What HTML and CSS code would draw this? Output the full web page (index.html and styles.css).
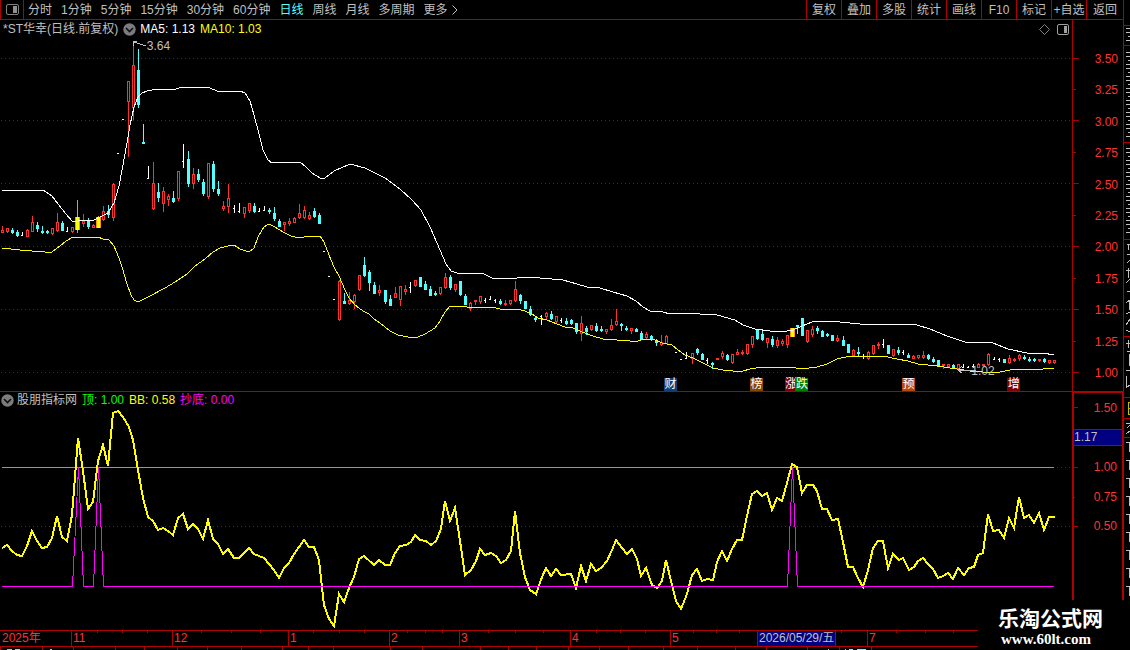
FILE: index.html
```html
<!DOCTYPE html>
<html lang="zh-CN">
<head>
	<meta charset="UTF-8">
	<title>*ST华幸 - 日线</title>
	<link rel="stylesheet" href="styles.css">
</head>
<body>

	<div class="wrap">

		<!-- toolbar -->
		<div class="toolbar">
			<button type="button" class="btn-side" aria-label="侧栏">
				<svg width="13" height="11" viewBox="0 0 13 11"><rect x="0.5" y="0.5" width="12" height="10" rx="1.5" fill="none" stroke="#808080"/><rect x="7" y="2" width="4" height="7" fill="#909090"/></svg>
			</button>
			<div class="period-list">
				<button type="button">分时</button>
				<button type="button">1分钟</button>
				<button type="button">5分钟</button>
				<button type="button">15分钟</button>
				<button type="button">30分钟</button>
				<button type="button">60分钟</button>
				<button type="button" class="on">日线</button>
				<button type="button">周线</button>
				<button type="button">月线</button>
				<button type="button">多周期</button>
				<button type="button" class="btn-more">更多<svg width="6" height="10" viewBox="0 0 6 10"><path d="M0.5 0.5L5 5L0.5 9.5" fill="none" stroke="#c0c0c0"/></svg></button>
			</div>
			<div class="tool-list">
				<button type="button">复权</button>
				<button type="button">叠加</button>
				<button type="button">多股</button>
				<button type="button">统计</button>
				<button type="button">画线</button>
				<button type="button">F10</button>
				<button type="button">标记</button>
				<button type="button">+自选</button>
				<button type="button">返回</button>
			</div>
		</div>
		<!-- //toolbar -->

		<!-- price -->
		<div class="pane pane-price">
			<svg class="plot" viewBox="0 20 1072 371" preserveAspectRatio="none">
				<g class="grid">
					<path d="M1 58.5H1072M1 120.5H1072M1 183.5H1072M1 246.5H1072M1 309.5H1072M1 372.5H1072"/>
				</g>
				<g id="el-candles"></g>
				<polyline class="ln-white" points="2,190 43,190 52,196 58,204 66,214 72,221 78,221 94,220 102,216 108,213 114,203 119,186 123,165 127,143 130,125 134,107 138,97 142,93 147,91 158,89 173,90 182,87 190,87 210,88 217,91 228,92 240,91 245,93 250,101 254,115 258,130 263,150 268,160 272,163 277,162 300,162 306,167 312,173 320,178 325,178 334,171 350,164 365,168 385,178 400,189 412,200 421,210 430,227 437,243 446,264 451,271 457,273 482,273 492,278 517,278 530,277 540,278 563,280 577,284 587,287 600,288 613,292 627,296 636,301 643,307 650,311 663,312 670,314 690,313 700,314 717,315 735,320 743,325 755,329 770,331 787,331 793,330 802,326 812,322 820,321 833,321 840,322 860,324 903,324 910,324 917,325 930,329 947,336 965,342 993,343 1008,349 1027,353 1043,353 1054,355"/>
				<polyline class="ln-yellow" points="2,248 20,250 32,251 45,252 52,252 60,246 66,241 73,237 98,237 103,239 109,240 114,246 119,258 123,270 127,284 131,295 134,300 138,302 144,299 150,296 165,288 175,282 187,274 195,266 205,259 213,252 220,248 228,246 234,245 240,249 249,252 254,248 258,237 264,227 269,224 275,227 283,232 291,236 299,238 309,236 320,236 324,242 329,255 334,267 339,276 345,290 349,298 355,305 363,311 369,314 374,319 380,323 390,331 398,335 408,337 418,337 425,334 435,328 440,321 445,312 450,306 462,306 467,307 492,307 500,309 517,309 525,311 532,314 538,318 547,320 557,324 565,327 573,328 582,332 593,336 603,339 617,340 630,341 638,341 643,339 653,339 662,343 672,345 678,350 685,355 693,358 703,363 713,368 723,370 733,371 743,371 750,369 763,367 790,367 802,369 817,367 827,364 837,359 850,356 883,356 897,359 908,361 918,364 937,366 957,369 970,371 983,372 1000,372 1010,370 1043,369 1054,368"/>
				<path class="ln-mark" d="M133.500 46V41H137M134 42L146 46M958 370H976M962 366L958 370L962 373"/>
			</svg>

			<div class="pane-title">
				<span>*ST华幸(日线.前复权)</span>
				<button type="button" class="btn-drop" aria-label="指标菜单"><svg width="13" height="13" viewBox="0 0 13 13"><circle cx="6.5" cy="6.5" r="6.2" fill="#7c7c7c"/><path d="M3 5L6.5 8.500L10 5" fill="none" stroke="#101010" stroke-width="1.6"/></svg></button>
				<span class="t-white">MA5: 1.13</span>
				<span class="t-yellow t-next">MA10: 1.03</span>
				<span class="pane-tools">
					<svg width="11" height="11" viewBox="0 0 11 11"><path d="M5.500 0.5L10.500 5.500L5.500 10.500L0.5 5.500Z" fill="none" stroke="#808080"/></svg>
					<svg width="12" height="11" viewBox="0 0 12 11"><rect x="0.5" y="0.5" width="11" height="10" rx="1.5" fill="none" stroke="#a0a0a0"/><rect x="7" y="2" width="3" height="7" fill="#a0a0a0"/></svg>
				</span>
			</div>

			<span class="mark mark-high">3.64</span>
			<span class="mark mark-low">1.02</span>

			<span class="flag flag-cai">财</span>
			<span class="flag flag-bang">榜</span>
			<span class="flag flag-zhang">涨</span>
			<span class="flag flag-die">跌</span>
			<span class="flag flag-yu">预</span>
			<span class="flag flag-zeng">增</span>
		</div>

		<div class="axis axis-price">
			<svg class="plot" viewBox="1072 20 51 371" preserveAspectRatio="none">
				<path class="ln-red" d="M1072 58.5H1078M1072 120.500H1078M1072 183.500H1078M1072 246.500H1078M1072 309.500H1078M1072 372.500H1078M1072 89.500H1075M1072 152.500H1075M1072 215.500H1075M1072 278.500H1075M1072 341.500H1075"/>
			</svg>
			<span>3.50</span>
			<span>3.25</span>
			<span>3.00</span>
			<span>2.75</span>
			<span>2.50</span>
			<span>2.25</span>
			<span>2.00</span>
			<span>1.75</span>
			<span>1.50</span>
			<span>1.25</span>
			<span>1.00</span>
		</div>
		<!-- //price -->

		<!-- indicator -->
		<div class="pane pane-sub">
			<svg class="plot" viewBox="0 392 1072 238" preserveAspectRatio="none">
				<g class="grid"><path d="M1 526.5H1072M1057 467.5H1072"/></g>
				<path class="ln-green" d="M2 467.5H1054"/>
				<polyline class="ln-bb" points="2,548 7,545 12,551 17,555 22,556 27,546 32,531 37,541 42,548 47,547 52,538 57,516 62,537 67,541 72,515 78,438 83,471 88,509 93,502 98,461 103,445 108,466 113,413 118,411 123,417 129,427 133,440 138,470 143,498 148,517 153,521 158,530 163,528 168,531 173,535 178,518 183,514 188,529 193,524 198,529 203,539 208,520 213,539 218,544 223,554 228,549 234,558 239,558 249,548 254,554 259,556 264,558 269,564 274,570 279,578 284,568 289,563 294,554 299,547 304,540 309,547 314,547 319,560 324,605 329,619 334,626 339,594 344,602 349,588 354,577 359,559 364,556 374,565 379,560 385,565 390,565 395,553 400,546 406,545 411,542 415,535 420,540 426,541 431,545 436,541 441,529 445,501 450,521 455,508 460,541 465,575 471,570 476,561 480,549 485,555 491,553 496,556 501,563 506,560 511,551 515,511 520,553 525,577 530,590 536,594 542,577 546,568 551,576 556,569 561,575 571,574 576,588 581,566 586,581 591,564 596,571 601,568 607,561 612,550 616,540 622,548 627,554 632,549 637,559 641,576 646,568 652,585 657,588 662,581 666,560 671,581 676,601 681,609 687,594 692,575 697,569 702,581 707,579 713,580 717,562 722,551 727,561 732,549 737,540 742,540 747,516 752,494 757,491 762,496 767,493 772,510 777,498 782,501 787,483 792,464 797,467 802,493 807,485 813,485 817,491 822,509 827,509 832,520 838,519 843,542 848,567 853,567 858,578 863,587 868,570 873,548 878,541 883,541 888,568 893,554 899,560 903,558 909,570 914,567 918,561 923,558 928,564 933,569 938,578 943,576 948,573 953,579 958,568 964,575 969,568 974,567 978,555 983,553 988,514 993,531 999,530 1004,538 1009,518 1014,528 1019,497 1024,518 1029,515 1034,523 1039,513 1044,530 1049,517 1055,517"/>
				<polyline class="ln-magenta" points="2,586.5 72.5,586.5 78.5,467 83.5,586.5 93.5,586.5 98.5,467 103.5,586.5 787.5,586.5 792.5,467 797.5,586.5 1054,586.5"/>
			</svg>
			<div class="pane-title">
				<button type="button" class="btn-drop" aria-label="指标菜单"><svg width="13" height="13" viewBox="0 0 13 13"><circle cx="6.5" cy="6.5" r="6.2" fill="#7c7c7c"/><path d="M3 5L6.5 8.500L10 5" fill="none" stroke="#101010" stroke-width="1.6"/></svg></button>
				<span>股朋指标网</span>
				<span class="t-green t-next">顶: 1.00</span>
				<span class="t-yellow t-next">BB: 0.58</span>
				<span class="t-magenta t-next">抄底: 0.00</span>
			</div>
		</div>

		<div class="axis axis-sub">
			<svg class="plot" viewBox="1074 393 48 237" preserveAspectRatio="none">
				<path class="ln-red" d="M1074 407.5H1078M1074 467.5H1078M1074 526.5H1078M1074 497.5H1075"/>
			</svg>
			<span>1.50</span>
			<span class="cursor-value">1.17</span>
			<span>1.00</span>
			<span>0.75</span>
			<span>0.50</span>
		</div>
		<!-- //indicator -->

		<!-- right strip, cut off by the window edge -->
		<div class="strip">
			<svg class="plot" viewBox="1124 0 6 650" preserveAspectRatio="none">
				<path class="ln-red" d="M1124 25.5H1130M1124 45.5H1130M1124 142.5H1130M1124 239.5H1130M1124 336.5H1130M1124 397.5H1130M1124 418.5H1130M1124 437.5H1130"/>
				<g id="el-strip" class="ln-gray"></g>
				<path class="ln-gray" d="M1127 244.5H1130M1128.500 244V250M1127 254.500H1130M1127 263L1130 260M1126 270.500H1130M1128.500 268V278M1126 283L1130 279M1127 291.500H1130M1126 303L1130 300M1129.500 300V310M1126 314L1130 312M1126 325L1130 319M1126 330L1130 332M1126 343.500H1130M1128.500 340V348M1127 351.500H1130M1129.500 354V366M1126 370.500H1130M1126.500 376V388M1126 388L1130 385M1126 423.500H1130M1127 428L1130 425M1126 434L1130 431"/>
				<path class="ln-olive" d="M1130 402.500H1128.500V414.500H1130M1128 408.500H1130"/>
			</svg>
		</div>

		<!-- time -->
		<div class="time">
			<svg class="plot" viewBox="0 630 978 20" preserveAspectRatio="none">
				<path class="ln-red" d="M0 630.5H978M0 646.5H978"/>
				<g id="el-ticks" class="ln-red"></g>
				<path class="ln-gray" d="M7 649.5H12M15 649.5H20M50 649.5H52M828 649.5H829M845 649.5H846"/>
				<path class="ln-cyan" d="M849 649.5H853M857 649.5H866"/>
			</svg>
			<div class="time-list">
				<span>2025年</span>
				<span>11</span>
				<span>12</span>
				<span>1</span>
				<span>2</span>
				<span>3</span>
				<span>4</span>
				<span>5</span>
				<span>7</span>
			</div>
			<span class="cursor-date">2026/05/29/五</span>
		</div>
		<!-- //time -->

		<div class="site">
			<strong>乐淘公式网</strong>
			<a href="#">www.60lt.com</a>
		</div>

	</div>

	<script src="chart.js"></script>
</body>
</html>
```
FILE: styles.css
```css
body{
	font-family: "Liberation Sans", "Noto Sans CJK SC", sans-serif;
	font-size: 12px;
	line-height: 16px;
	color: #c0c0c0;
	background: #000;
}
body, div, span, a{ margin: 0; padding: 0; }
button{
	background: none;
	border: 0;
	color: inherit;
	font: inherit;
	margin: 0;
	padding: 0;
	cursor: pointer;
}
svg{ display: block; flex: none; }

.wrap{
	position: relative;
	display: grid;
	grid-template-columns: 1fr 51px 7px;
	grid-template-rows: 20px 372fr 238fr 20px;
	min-height: 100vh;
	overflow: hidden;
}

/* toolbar */
.toolbar{
	grid-column: 1 / 3;
	display: flex;
	border-bottom: 1px solid #b00000;
}
.btn-side{
	display: flex;
	align-items: center;
	justify-content: center;
	width: 24px;
	box-sizing: border-box;
	border: solid #b00000;
	border-width: 0 1px;
}
.period-list{
	display: flex;
	gap: 9px;
	margin-left: 4px;
	white-space: nowrap;
}
.period-list .on{ color: #54ffff; }
.btn-more{
	display: flex;
	align-items: center;
	gap: 4px;
}
.tool-list{
	display: flex;
	margin-left: auto;
	white-space: nowrap;
}
.tool-list button{
	width: 35px;
	border-left: 1px solid #b00000;
}
.tool-list button:last-child{ width: 37px; }

/* pane */
.pane{ position: relative; grid-column: 1; }
.pane-price{ border-bottom: 1px solid #b00000; }
.plot{
	position: absolute;
	left: 0;
	top: 0;
	width: 100%;
	height: 100%;
	shape-rendering: crispEdges;
}
.pane-title{
	position: relative;
	display: flex;
	align-items: center;
	height: 18px;
	padding-left: 3px;
	white-space: nowrap;
}
.pane-sub .pane-title{ height: 16px; padding-left: 1px; }
.btn-drop{ margin: 0 4px 0 5px; }
.pane-sub .btn-drop{ margin: 0 3px 0 0; }
.t-next{ margin-left: 5px; }
.t-white{ color: #fff; }
.t-yellow{ color: #ff0; }
.t-green{ color: #0f0; }
.t-magenta{ color: #f0f; }
.pane-tools{
	display: flex;
	gap: 7px;
	margin-left: auto;
	padding-right: 3px;
}

.grid path{ stroke: #b00000; stroke-dasharray: 1 3; fill: none; }
.ln-red{ stroke: #b00000; fill: none; }
.ln-white{ stroke: #fff; fill: none; }
.ln-yellow{ stroke: #ff0; fill: none; }
.ln-green{ stroke: #0f0; fill: none; }
.ln-magenta{ stroke: #f0f; fill: none; }
.ln-cyan{ stroke: #54ffff; fill: none; }
.ln-gray, .ln-mark{ stroke: #c0c0c0; fill: none; }
.ln-olive{ stroke: #c0c000; fill: none; }
.ln-bb{ stroke: #ff0; stroke-width: 2; fill: none; }

/* marks on the chart */
.mark{ position: absolute; }
.mark-high{ left: 13.7%; top: 4.8%; }
.mark-low{ left: 90.6%; top: 92.4%; }
.flag{
	position: absolute;
	bottom: 0;
	width: 13px;
	height: 13px;
	line-height: 13px;
	color: #fff;
	text-align: center;
}
.flag-cai{ left: 61.95%; background: #0f4078; }
.flag-bang{ left: 69.96%; background: #8a4500; }
.flag-zhang{ left: 73.2%; background: #800000; }
.flag-die{ left: 74.2%; background: #008000; }
.flag-yu{ left: 84.15%; background: #b8480c; }
.flag-zeng{ left: 93.95%; background: #800000; }

/* axis */
.axis{
	position: relative;
	display: grid;
	color: #ff3232;
	align-items: center;
	text-align: right;
}
.axis span{ padding-right: 5px; }
.axis-price{
	grid-auto-rows: 1fr;
	border-left: 1px solid #b00000;
	border-bottom: 1px solid #b00000;
	padding: 23px 0 2px;
}
.axis-sub{
	grid-template-rows: repeat(5, 1fr) 3fr;
	margin-top: -1px;
	margin-right: -1px;
	border: solid #b00000;
	border-width: 2px 2px 0;
}
.axis .cursor-value{
	border: solid #b00000;
	border-width: 1px 0;
	background: #000080;
	color: #c0c0c0;
	text-align: left;
	line-height: 15px;
}

.strip{
	grid-column: 3;
	grid-row: 1 / 5;
	position: relative;
	border-left: 1px solid #b00000;
}

/* time */
.time{
	position: relative;
	grid-column: 1;
	grid-row: 4;
	margin-right: 94px;
}
.time-list{
	display: grid;
	grid-template-columns: 71fr 101fr 116fr 101fr 70fr 111fr 100fr 197fr 111fr;
	color: #ff3232;
	line-height: 17px;
	height: 17px;
}
.time-list span{ border-left: 1px solid #b00000; padding-left: 1px; }
.time-list span:first-child{ border-left: 0; padding-left: 2px; }
.cursor-date{
	position: absolute;
	left: 77.4%;
	top: 0;
	border: 1px solid #b00000;
	background: #000080;
	line-height: 15px;
	padding: 0 1px;
}

/* site name over the corner */
.site{
	position: absolute;
	right: 0;
	bottom: 0;
	width: 152px;
	height: 50px;
	box-sizing: border-box;
	padding: 8px 0 0 20px;
	background: #000;
	color: #fff;
}
.site strong{
	display: block;
	font-size: 21px;
	line-height: 22px;
}
.site a{
	display: block;
	padding-left: 3px;
	font: bold 15px/18px "Liberation Serif", serif;
	color: #fff;
	text-decoration: none;
}
```
FILE: chart.js
```js
// r : up, c : down, y : signal  -> high, body top, body bottom, low
// w : flat bar -> high, low, close
// d : one price day
// x : no bar
var bars = "r226 230 232 232,r228 228 231 232,c228 230 232 233,c230 232 235 236,w232 236 235,r229 230 236 236,r216 222 231 231,c222 225 228 231,c226 231 232 233,c230 231 232 233," +
	"r228 228 233 234,r213 222 230 231,c221 223 230 230,w227 232 231,r227 227 231 232,y200 217 229 232,r214 221 223 226,c218 220 226 228,r224 225 227 227,y216 217 227 227," +
	"r206 211 219 220,c205 211 214 217,r183 184 217 220,d153,d119,r81 81 101 156,r42 65 107 119,c49 70 104 107,c124 142 143 143,w166 179 178," +
	"r162 183 208 209,c183 192 197 201,r187 191 203 211,r194 196 199 205,c191 198 201 202,r171 171 198 200,w144 168 161,c151 159 183 186,r168 174 183 188,c169 174 179 181," +
	"c179 182 193 195,r163 163 196 198,c161 164 188 191,c181 189 193 195,r201 206 208 210,r184 198 206 212,w205 213 208,w203 213 211,r207 207 213 217,r203 203 210 212," +
	"c203 206 211 212,w208 212 211,w206 211 210,c208 210 211 213,c207 213 218 220,c219 221 226 226,r222 222 224 230,r218 221 223 225,r217 218 222 222,r204 213 217 218," +
	"r206 210 217 218,r212 215 218 219,c208 211 216 217,c213 215 223 223,d251,d276,d299,r280 281 319 320,c293 301 303 303,r292 300 303 304," +
	"r294 295 301 308,r275 275 289 290,c257 265 275 276,c270 272 282 290,c282 285 293 293,r285 290 292 295,c290 290 301 303,c295 299 305 305,r287 293 297 297,r286 286 299 305," +
	"r285 289 291 294,w282 293 287,r280 280 285 286,c277 277 286 286,c281 284 289 289,c286 289 295 295,c291 293 294 295,r287 287 293 294,r273 277 287 288,c275 277 287 289," +
	"r284 284 289 291,c281 281 294 295,c294 296 304 304,r302 303 308 310,r300 300 301 304,r296 296 301 303,w298 303 300,w296 300 299,w299 303 300,c299 301 303 304," +
	"r300 303 304 305,r300 300 303 304,r281 289 300 301,c294 295 300 303,c301 301 308 308,c306 309 314 315,c316 318 319 321,w315 325 316,r312 313 316 318,c311 314 318 319," +
	"r316 316 321 322,w318 323 320,c318 321 323 324,c319 320 323 324,c323 323 331 333,r316 323 333 340,c326 328 331 334,r325 325 329 330,c323 326 330 331,c326 329 330 331," +
	"r329 329 331 333,r319 325 329 330,r309 321 324 325,c323 324 325 330,c326 328 329 330,r328 328 330 333,c328 329 331 331,c331 333 338 338,r332 334 337 339,c335 336 339 340," +
	"c339 340 342 345,r335 342 344 345,r335 336 343 343,x,d352,d359,w352 359 358,r353 353 358 363,c348 349 352 354,c353 354 359 359," +
	"w358 364 360,c362 363 364 368,r358 358 359 359,r351 353 356 358,c354 355 359 360,r354 354 362 363,r349 352 354 354,r350 352 353 354,r344 344 353 354,r336 336 344 347," +
	"c330 330 338 339,c331 334 339 340,r338 338 342 347,c336 339 344 346,r337 340 345 347,r339 341 343 345,r335 335 344 347,y328 328 336 336,c325 325 326 333,c318 318 335 335," +
	"r330 330 341 342,r326 329 334 336,c326 328 330 333,c330 331 336 336,c333 334 335 336,c335 335 340 340,r335 338 340 341,c336 340 345 345,c344 344 352 352,r349 350 355 356," +
	"c347 352 353 355,w354 359 356,r351 352 358 359,r345 345 353 354,r342 344 345 348,w339 348 344,c345 345 353 353,r349 349 355 356,c347 350 352 354,w350 355 352," +
	"c353 355 357 357,r355 356 358 358,r355 355 357 358,r351 355 357 358,c354 355 358 359,c357 359 361 362,c360 360 366 366,r364 364 365 368,r364 364 366 366,c364 365 367 368," +
	"r364 364 368 368,w364 368 367,w366 368 367,w364 368 366,r363 364 367 367,r364 364 365 365,r353 354 364 365,w357 360 359,w358 362 359,c359 359 362 362," +
	"r355 358 362 363,r358 359 360 361,r354 355 358 360,c355 357 358 359,c357 359 360 361,c358 359 360 361,r359 359 360 361,c358 359 361 362,r360 360 362 363,r360 360 362 363";

var color = { r: "#ff3232", c: "#54ffff", y: "#ff9600", w: "#ffffff", d: "#ffffff" };

function rect(x, y, w, h, fill){
	return '<rect x="' + x + '" y="' + y + '" width="' + w + '" height="' + h + '" fill="' + fill + '"/>';
}

function fn_candles(){
	var html = "";

	bars.split(",").forEach(function(bar, i){
		var type = bar.charAt(0);
		var v = bar.slice(1).split(" ").map(Number);
		var x = Math.round(2 + 5.033 * i);
		var c = color[type];

		if(type == "x") return;
		if(type == "d"){
			html += rect(x - 1, v[0], 2, 1, c);
			return;
		}
		if(type == "w"){
			html += rect(x, v[0], 1, v[1] - v[0], c) + rect(x - 1, v[2], 1, 1, c);
			return;
		}

		html += rect(x, v[0], 1, v[3] - v[0] + 1, c);
		if(type == "y"){
			html += rect(x - 2, v[1], 5, v[2] - v[1] + 1, c) + rect(x - 1, v[1], 3, v[2] - v[1] + 1, "#ffff00");
		}else{
			html += rect(x - 1, v[1], 3, v[2] - v[1] + 1, c);
		}
		// hollow body
		if(type == "r" && v[2] - v[1] > 1){
			html += rect(x, v[1] + 1, 1, v[2] - v[1] - 1, "#000000");
		}
	});

	document.getElementById("el-candles").innerHTML = html;
}

function fn_ticks(){
	var top = [97,122,147,201,231,260,313,339,364,407,425,442,488,515,543,596,620,645,693,716,739,841,896,925,953];
	var bottom = [0,42,73,115,144,177,207,241,282,308,333,390,422,480,508,536,568,599,628,663,697,735,766,807,839,871];
	var d = "";

	top.forEach(function(x){ d += "M" + (x + 0.5) + " 631V633"; });
	bottom.forEach(function(x){ d += "M" + (x + 0.5) + " 647V650"; });
	document.getElementById("el-ticks").innerHTML = '<path d="' + d + '"/>';
}

function fn_strip(){
	var d = "";
	var y;

	for(y = 28; y < 236; y += 4){
		if((y > 40 && y < 50) || (y > 138 && y < 146)) continue;
		d += "M" + (y % 3 ? 1126 : 1128) + " " + (y + 0.5) + "H1130";
	}
	for(y = 442; y < 600; y += 18){
		d += "M1126 " + (y + 0.5) + "H1130M1129 " + y + "V" + (y + 10);
	}
	document.getElementById("el-strip").innerHTML = '<path d="' + d + '"/>';
}

fn_candles();
fn_ticks();
fn_strip();
```
